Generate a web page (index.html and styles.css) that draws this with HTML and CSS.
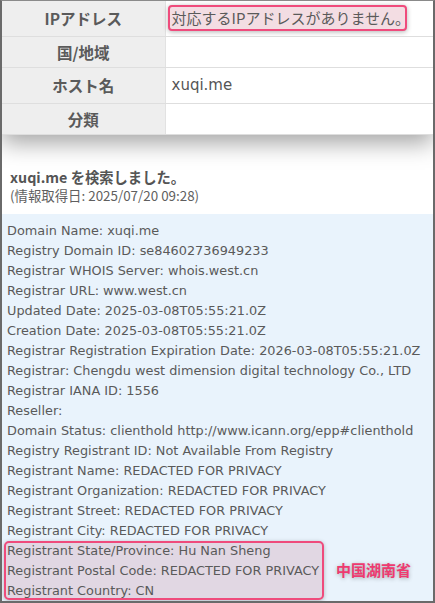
FILE: index.html
```html
<!DOCTYPE html>
<html lang="ja">
<head>
<meta charset="utf-8">
<title>xuqi.me WHOIS</title>
<link rel="stylesheet" href="styles.css">
</head>
<body>
<div class="frame">
  <table class="info">
    <tr class="row-tall">
      <th>IPアドレス</th>
      <td><span class="mark">対応するIPアドレスがありません。</span></td>
    </tr>
    <tr class="row-short">
      <th>国/地域</th>
      <td></td>
    </tr>
    <tr class="row-tall">
      <th>ホスト名</th>
      <td>xuqi.me</td>
    </tr>
    <tr class="row-short">
      <th>分類</th>
      <td></td>
    </tr>
  </table>

  <div class="result">
    <h2 class="result-title">xuqi.me を検索しました。</h2>
    <p class="result-date">(情報取得日: 2025/07/20 09:28)</p>
  </div>

  <div class="whois">
    <div class="line">Domain Name: xuqi.me</div>
    <div class="line">Registry Domain ID: se84602736949233</div>
    <div class="line">Registrar WHOIS Server: whois.west.cn</div>
    <div class="line">Registrar URL: www.west.cn</div>
    <div class="line">Updated Date: 2025-03-08T05:55:21.0Z</div>
    <div class="line">Creation Date: 2025-03-08T05:55:21.0Z</div>
    <div class="line">Registrar Registration Expiration Date: 2026-03-08T05:55:21.0Z</div>
    <div class="line">Registrar: Chengdu west dimension digital technology Co., LTD</div>
    <div class="line">Registrar IANA ID: 1556</div>
    <div class="line">Reseller:</div>
    <div class="line">Domain Status: clienthold http://www.icann.org/epp#clienthold</div>
    <div class="line">Registry Registrant ID: Not Available From Registry</div>
    <div class="line">Registrant Name: REDACTED FOR PRIVACY</div>
    <div class="line">Registrant Organization: REDACTED FOR PRIVACY</div>
    <div class="line">Registrant Street: REDACTED FOR PRIVACY</div>
    <div class="line">Registrant City: REDACTED FOR PRIVACY</div>
    <div class="annotated">
      <div class="mark-box">
        <div class="line">Registrant State/Province: Hu Nan Sheng</div>
        <div class="line">Registrant Postal Code: REDACTED FOR PRIVACY</div>
        <div class="line">Registrant Country: CN</div>
      </div>
      <span class="note">中国湖南省</span>
    </div>
  </div>
</div>
</body>
</html>
```

FILE: styles.css
```css
* { box-sizing: border-box; }

html, body {
  margin: 0;
  padding: 0;
  background: #ffffff;
}

body {
  font-family: "DejaVu Sans", "Noto Sans CJK JP", sans-serif;
  color: #555555;
}

.frame {
  width: 435px;
  height: 603px;
  border-top: 1px solid #8a8a8a;
  border-left: 2px solid #6a6a6a;
  border-right: 2px solid #6a6a6a;
  border-bottom: 2px solid #6a6a6a;
  overflow: hidden;
  background: #ffffff;
}

/* ---------- info table ---------- */
.info {
  width: 100%;
  border-collapse: collapse;
  box-shadow: 0 8px 22px rgba(0, 0, 0, 0.36);
  position: relative;
  background: #fff;
}

.info th,
.info td {
  border-bottom: 1px solid #dedede;
  padding: 0;
  vertical-align: middle;
}

.info th {
  width: 163px;
  background: #eeeeee;
  border-right: 1px solid #e2e2e2;
  font-family: "Noto Sans CJK JP", sans-serif;
  font-weight: bold;
  font-size: 15.5px;
  color: #5a5a5a;
  text-align: center;
}

.info td {
  background: #ffffff;
  font-family: "DejaVu Sans", "Noto Sans CJK JP", sans-serif;
  font-size: 15px;
  color: #555555;
  padding-left: 6px;
}

.row-tall { height: 36px; }
.row-short { height: 31px; }
.info tr:first-child { height: 35px; }

.mark {
  display: inline-block;
  font-family: "Noto Sans CJK JP", sans-serif;
  font-size: 15px;
  font-feature-settings: "halt" 1;
  line-height: 22px;
  margin-left: -4px;
  padding: 0 3px 0 2px;
  border: 2px solid #ef4b7c;
  border-radius: 4px;
  background: #f3dde3;
  box-shadow: 0 1px 5px rgba(0, 0, 0, 0.3);
  color: #5a5a5a;
}

/* ---------- result heading ---------- */
.result {
  padding: 32px 8px 10px 8px;
}

.result-title {
  margin: 0;
  font-family: "Noto Sans CJK JP", sans-serif;
  font-size: 14.3px;
  font-weight: bold;
  line-height: 19px;
  color: #555555;
}

.result-date {
  margin: 0;
  font-family: "Noto Sans CJK JP", sans-serif;
  font-size: 13.4px;
  line-height: 18px;
  color: #5f5f5f;
}

/* ---------- whois block ---------- */
.whois {
  background: #e9f3fc;
  padding: 7px 5px 0 5px;
  font-size: 12.85px;
  line-height: 20px;
  color: #5a5a5a;
  height: 400px;
}

.line {
  white-space: nowrap;
}

.annotated {
  display: flex;
  align-items: center;
  gap: 12px;
}

.mark-box {
  margin-left: -3px;
  padding: 0 3px 0 1px;
  border: 2px solid #ef4b7c;
  border-radius: 5px;
  background: #e1d7e3;
  box-shadow: 0 1px 4px rgba(0, 0, 0, 0.25);
}

.mark-box .line:first-child { margin-top: -2px; }
.mark-box .line:last-child { margin-bottom: -3px; }

.note {
  font-family: "Noto Sans CJK JP", sans-serif;
  font-weight: bold;
  font-size: 15px;
  color: #ee3a70;
  text-shadow: 0 1px 4px rgba(0, 0, 0, 0.3);
}
```
